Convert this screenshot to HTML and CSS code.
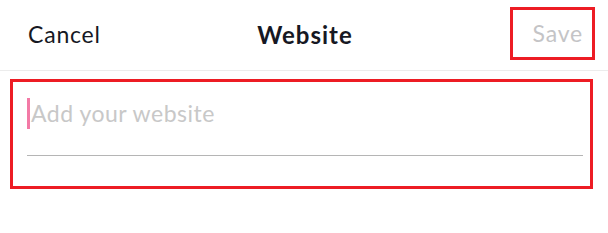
FILE: index.html
```html
<!DOCTYPE html>
<html lang="en">
<head>
<meta charset="utf-8">
<title>Website</title>
<link rel="stylesheet" href="styles.css">
</head>
<body>
  <header class="topbar">
    <span class="cancel">Cancel</span>
    <h1 class="title">Website</h1>
    <span class="save">Save</span>
  </header>
  <section class="field-box">
    <div class="field">
      <span class="caret"></span>
      <span class="placeholder">Add your website</span>
    </div>
  </section>
</body>
</html>
```

FILE: styles.css
```css
* { box-sizing: border-box; }

html, body {
  margin: 0;
  padding: 0;
  background: #ffffff;
  width: 608px;
  height: 233px;
  overflow: hidden;
  font-family: "Lato", "Noto Sans", sans-serif;
}

.topbar {
  display: grid;
  grid-template-columns: 1fr auto 1fr;
  align-items: center;
  height: 71px;
  padding: 0 13px 1px 13px;
  border-bottom: 1px solid #ececec;
}

.cancel {
  justify-self: start;
  margin-left: 15px;
  font-size: 23px;
  letter-spacing: 0.8px;
  color: #161823;
  margin-top: -1px;
}

.title {
  margin: -1px 0 0 2px;
  font-size: 24px;
  font-weight: 700;
  letter-spacing: 1px;
  color: #161823;
}

.save {
  justify-self: end;
  width: 85px;
  height: 53px;
  margin-top: -3px;
  border: 3px solid #ed1c24;
  display: flex;
  align-items: center;
  justify-content: flex-end;
  padding-right: 9px;
  font-size: 23px;
  letter-spacing: 0.8px;
  color: #c4c4c6;
}

.field-box {
  margin: 8px 15px 0 10px;
  height: 110px;
  border: 3px solid #ed1c24;
  padding: 15px 7px 0 14px;
}

.field {
  display: flex;
  align-items: center;
  height: 59px;
  border-bottom: 1px solid #b5b5b5;
  padding-bottom: 26px;
}

.caret {
  width: 3px;
  height: 31px;
  background: #f37aa6;
  margin-right: 1px;
}

.placeholder {
  font-size: 23px;
  letter-spacing: 0.5px;
  color: #c8c8c8;
}
```
